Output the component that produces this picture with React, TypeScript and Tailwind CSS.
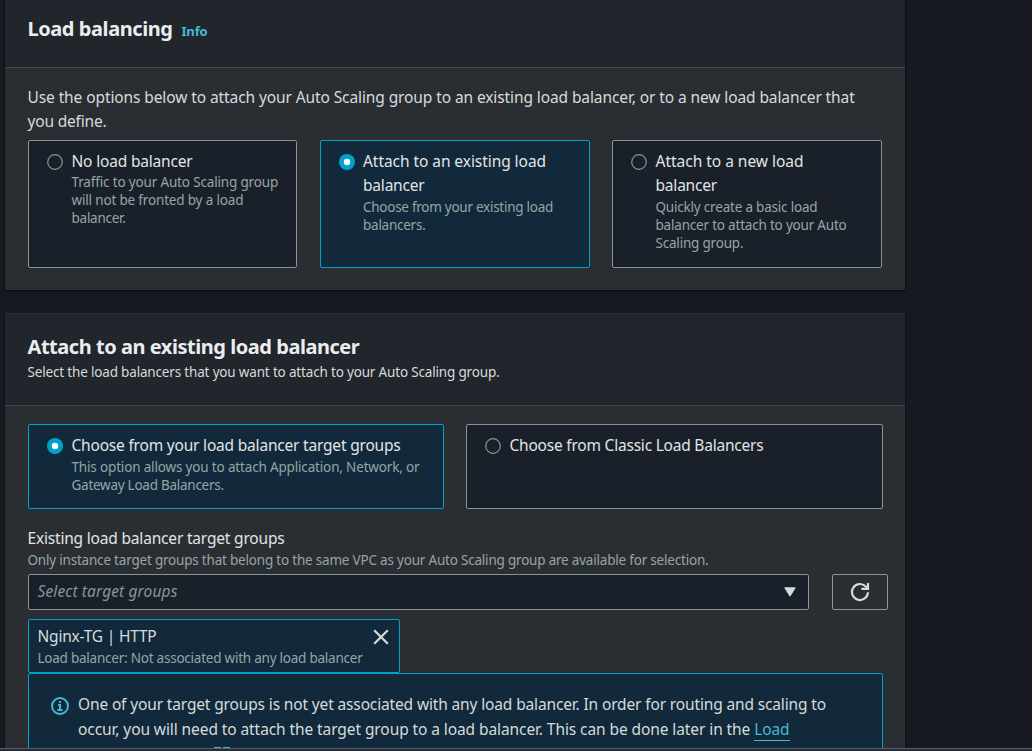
import type { ReactNode } from "react";

function Radio({ checked }: { checked?: boolean }) {
  return (
    <svg className="mt-[5px] h-4 w-4 shrink-0" viewBox="0 0 16 16">
      {checked ? (
        <>
          <circle cx="8" cy="8" r="8" fill="#00a1c9" />
          <circle cx="8" cy="8" r="3.2" fill="#fff" />
        </>
      ) : (
        <circle cx="8" cy="8" r="7.3" fill="#1a2029" stroke="#879596" strokeWidth="1.2" />
      )}
    </svg>
  );
}

function Tile({
  checked,
  compact,
  title,
  children,
}: {
  checked?: boolean;
  compact?: boolean;
  title: ReactNode;
  children?: ReactNode;
}) {
  return (
    <div
      className={
        checked
          ? "flex gap-[8.5px] rounded-[2px] border border-[#00a1c9] bg-[#12293b] pt-[8px] pl-[18px]"
          : "flex gap-[8.5px] rounded-[2px] border border-[#879596] bg-[#1a2029] pt-[8px] pl-[18px]"
      }
    >
      <Radio checked={checked} />
      <div className="whitespace-nowrap">
        <div className="text-[15.5px] leading-[24px] text-[#e1e4e5]">{title}</div>
        <div
          className={
            compact
              ? "text-[13.5px] leading-[18px] text-[#95a5a6]"
              : "mt-px text-[13.5px] leading-[18px] text-[#95a5a6]"
          }
        >
          {children}
        </div>
      </div>
    </div>
  );
}

export default function App() {
  return (
    <div className="flex h-[751px] flex-col overflow-hidden bg-[#16191f] font-['Noto_Sans',sans-serif] text-[#d5dbdb]">
      <div className="flex min-h-0 flex-1 flex-col overflow-hidden pl-[5px]">
        <section className="h-[290px] w-[900px] shrink-0 bg-[#2a2e33] shadow-[0_1px_1px_0_#0b0d11,1px_1px_1px_0_#0f1216,-1px_1px_1px_0_#0f1216]">
          <header className="flex h-[68px] items-baseline gap-[9px] border-b border-[#414750] bg-[#21252c] pt-[15px] pl-[22.5px]">
            <h2 className="text-[20px] leading-[28px] font-bold tracking-[-0.43px] text-[#eaeded]">Load balancing</h2>
            <a className="text-[13px] font-bold tracking-[-0.17px] text-[#44b9d6]">Info</a>
          </header>
          <div className="pt-[17px] pl-[23px]">
            <p className="-ml-[0.5px] text-[15.5px] leading-[24px] whitespace-nowrap">
              <span className="tracking-[-0.1px]">
                Use the options below to attach your Auto Scaling group to an existing load balancer, or to a new load balancer that
              </span>
              <br />
              <span className="tracking-[-0.18px]">you define.</span>
            </p>
            <div className="mt-[7px] grid h-[128px] w-[854px] grid-cols-[269px_270px_270px] gap-[22.5px]">
              <Tile compact title={<span className="tracking-[-0.18px]">No load balancer</span>}>
                <span className="tracking-[-0.16px]">Traffic to your Auto Scaling group</span>
                <br />
                <span className="tracking-[-0.17px]">will not be fronted by a load</span>
                <br />
                <span className="tracking-[-0.25px]">balancer.</span>
              </Tile>
              <Tile
                checked
                title={
                  <>
                    <span className="tracking-[-0.06px]">Attach to an existing load</span>
                    <br />
                    <span className="tracking-[-0.2px]">balancer</span>
                  </>
                }
              >
                <span className="tracking-[-0.267px]">Choose from your existing load</span>
                <br />
                <span className="tracking-[-0.25px]">balancers.</span>
              </Tile>
              <Tile
                title={
                  <>
                    <span className="tracking-[-0.02px]">Attach to a new load</span>
                    <br />
                    <span className="tracking-[-0.2px]">balancer</span>
                  </>
                }
              >
                <span className="tracking-[-0.2px]">Quickly create a basic load</span>
                <br />
                <span className="tracking-[-0.2px]">balancer to attach to your Auto</span>
                <br />
                <span className="tracking-[-0.2px]">Scaling group.</span>
              </Tile>
            </div>
          </div>
        </section>

        <section className="mt-[23px] h-[500px] w-[900px] shrink-0 border-t border-[#2d3035] bg-[#2a2e33] shadow-[1px_1px_1px_0_#0f1216,-1px_1px_1px_0_#0f1216]">
          <header className="h-[92px] border-b border-[#414750] bg-[#21252c] pt-[19px] pl-[22.5px]">
            <h2 className="text-[20px] leading-[28px] font-bold tracking-[-0.46px] text-[#eaeded]">
              Attach to an existing load balancer
            </h2>
            <p className="mt-[2px] text-[13.5px] leading-[18px] tracking-[-0.172px]">
              Select the load balancers that you want to attach to your Auto Scaling group.
            </p>
          </header>
          <div className="pt-[18px] pl-[23px]">
            <div className="grid h-[85px] w-[855px] grid-cols-[416px_417px] gap-[22px]">
              <Tile checked title={<span className="tracking-[-0.197px]">Choose from your load balancer target groups</span>}>
                <span className="tracking-[-0.163px]">This option allows you to attach Application, Network, or</span>
                <br />
                <span className="tracking-[-0.26px]">Gateway Load Balancers.</span>
              </Tile>
              <Tile title={<span className="tracking-[-0.214px]">Choose from Classic Load Balancers</span>} />
            </div>

            <div className="mt-[18px] -ml-[0.5px] text-[15.5px] leading-[22px] tracking-[-0.186px] text-[#e1e4e5]">
              Existing load balancer target groups
            </div>
            <div className="mt-[2px] -ml-[0.5px] text-[13.5px] leading-[18px] tracking-[-0.203px] text-[#95a5a6]">
              Only instance target groups that belong to the same VPC as your Auto Scaling group are available for selection.
            </div>
            <div className="mt-[5px] flex h-9 gap-[23px]">
              <div className="flex w-[781px] items-center justify-between rounded-[2px] border border-[#879596] bg-[#1a2029] pr-3 pl-[8.5px]">
                <span className="pb-[2px] text-[15.5px] leading-[24px] tracking-[0.12px] text-[#879596] italic">
                  Select target groups
                </span>
                <svg className="h-[10px] w-3" viewBox="0 0 12 10">
                  <path d="M.8.8h10.4L6 9.2z" fill="#d5dbdb" stroke="#d5dbdb" strokeLinejoin="round" />
                </svg>
              </div>
              <button className="flex w-14 items-center justify-center rounded-[2px] border border-[#879596]">
                <svg className="h-5 w-5" viewBox="0 0 20 20" fill="none" stroke="#d5dbdb" strokeWidth="2.2">
                  <path d="M18 10.2a8 8 0 1 1-2.5-6L17.4 6" />
                  <path d="M18 1v5.8h-6.6" />
                </svg>
              </button>
            </div>

            <div className="mt-[9px] flex h-[54px] w-[372px] justify-between rounded-[2px] border border-[#00a1c9] bg-[#12293b] pt-[4px] pr-[10px] pl-[8.5px]">
              <div className="whitespace-nowrap">
                <div className="text-[15.5px] leading-[24px] tracking-[-0.204px]">Nginx-TG | HTTP</div>
                <div className="mt-px text-[13.5px] leading-[18px] tracking-[-0.233px] text-[#95a5a6]">
                  Load balancer: Not associated with any load balancer
                </div>
              </div>
              <svg className="mt-[5px] h-4 w-4" viewBox="0 0 16 16" stroke="#d5dbdb" strokeWidth="2.2">
                <path d="M1.2 1.2l13.6 13.6M14.8 1.2L1.2 14.8" />
              </svg>
            </div>

            <div className="flex h-[120px] w-[855px] gap-[9px] rounded-[2px] border border-[#00a1c9] bg-[#12293b] pt-[18px] pl-[22px]">
              <svg className="mt-[5px] h-[18px] w-[18px] shrink-0" viewBox="0 0 18 18" fill="none" stroke="#44b9d6">
                <circle cx="9" cy="9" r="8" strokeWidth="2" />
                <path d="M9 4v2M7 8h2v5M6.5 13h5" strokeWidth="2" />
              </svg>
              <div className="text-[15.5px] leading-[25px] whitespace-nowrap">
                <span className="tracking-[-0.143px]">
                  One of your target groups is not yet associated with any load balancer. In order for routing and scaling to
                </span>
                <br />
                <span className="tracking-[-0.09px]">
                  occur, you will need to attach the target group to a load balancer. This can be done later in the{" "}
                  <a className="border-b border-[#44b9d6] text-[#44b9d6]">Load</a>
                </span>
                <svg className="mt-[5px] ml-[136px] h-4 w-4" viewBox="0 0 16 16" fill="none" stroke="#44b9d6" strokeWidth="2">
                  <path d="M7 1H1v14h14V9M9 1h6v6M15 1L7 9" />
                </svg>
              </div>
            </div>
          </div>
        </section>
      </div>
      <footer className="h-[3px] shrink-0 border-t border-[#545b64] bg-[#232f3e]" />
    </div>
  );
}
